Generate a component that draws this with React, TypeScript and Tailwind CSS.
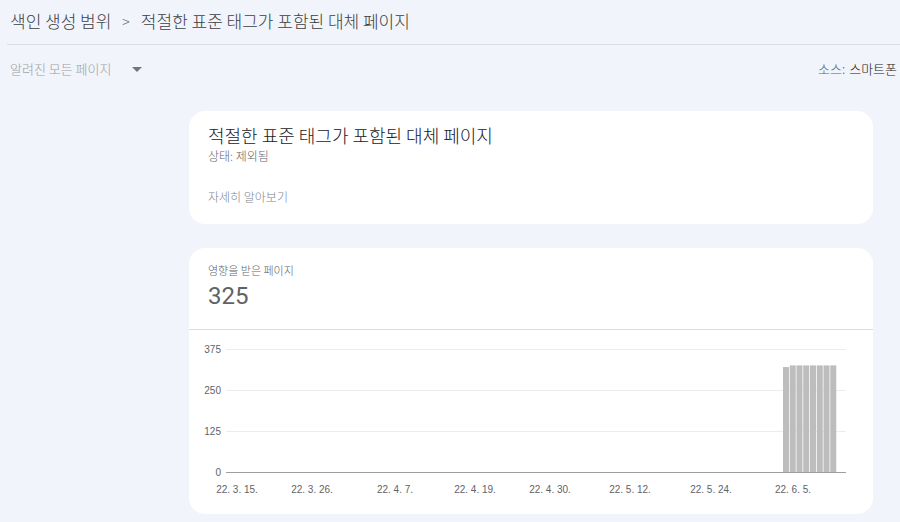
const KR = "font-['Noto_Sans_CJK_KR','Noto_Sans',sans-serif]"

const yTicks = [
  { v: 375, y: 350 },
  { v: 250, y: 391 },
  { v: 125, y: 432 },
  { v: 0, y: 473 },
]

const xTicks = [
  { label: '22. 3. 15.', x: 237 },
  { label: '22. 3. 26.', x: 312 },
  { label: '22. 4. 7.', x: 395 },
  { label: '22. 4. 19.', x: 475 },
  { label: '22. 4. 30.', x: 550 },
  { label: '22. 5. 12.', x: 630 },
  { label: '22. 5. 24.', x: 711 },
  { label: '22. 6. 5.', x: 793 },
]

// daily counts of the last week shown
const bars = [320, 325, 325, 325, 325, 325, 325, 325]

const Chart = () => {
  // svg origin is the card's left / chart top (card x=189, chart area starts at y=331)
  const ox = 189
  const oy = 331
  const zeroY = 473
  const pxPer = (473 - 350) / 375
  return (
    <svg width="684" height="183" className="block">
      {yTicks.map(t => (
        <g key={t.v}>
          <line
            x1={226 - ox}
            x2={846 - ox}
            y1={t.y - oy + 0.5}
            y2={t.y - oy + 0.5}
            stroke={t.v === 0 ? '#9e9e9e' : '#ececec'}
            strokeWidth={1}
          />
          <text
            x={221 - ox}
            y={t.y - oy + 3.5}
            textAnchor="end"
            fontSize="10"
            fill="#5f6368"
            fontFamily="'Liberation Sans', Arial, sans-serif"
          >
            {t.v}
          </text>
        </g>
      ))}
      {bars.map((v, i) => {
        const h = v * pxPer
        const x = 783 + i * 6.75 - ox
        return (
          <rect key={i} x={x} y={zeroY - oy - h} width={6} height={h} fill="#bdbdbd" />
        )
      })}
      {xTicks.map(t => (
        <text
          key={t.label}
          x={t.x - ox}
          y={494 - oy}
          textAnchor="middle"
          fontSize="10"
          fill="#5f6368"
          fontFamily="'Liberation Sans', Arial, sans-serif"
        >
          {t.label}
        </text>
      ))}
    </svg>
  )
}

export default function App() {
  return (
    <div className={`w-[900px] h-[522px] overflow-hidden bg-[#f1f4fa] font-light ${KR}`}>
      {/* breadcrumb */}
      <div className="ml-[7px] h-[45px] border-b border-[#dadce0] flex items-center pl-[3px] pb-[2px] text-[17px] text-[#3c4043] whitespace-nowrap">
        <span>색인 생성 범위</span>
        <span className="mx-[11px] text-[14px] text-[#5f6368]">&gt;</span>
        <span>적절한 표준 태그가 포함된 대체 페이지</span>
      </div>

      {/* filter row */}
      <div className="flex items-center justify-between h-[48px] pl-[10px] whitespace-nowrap">
        <div className="flex items-center text-[13px] text-[#9aa0a6]">
          <span>알려진 모든 페이지</span>
          <span className="ml-[21px] w-0 h-0 border-l-[5px] border-r-[5px] border-t-[5px] border-l-transparent border-r-transparent border-t-[#757575]" />
        </div>
        <div className="text-[13px] flex items-center w-[82px] shrink-0 overflow-hidden">
          <span className="text-[#5f6368]">소스:</span>
          <span className="ml-[4px] text-[#202124]">스마트폰</span>
          <span className="ml-[3px] shrink-0 w-0 h-0 border-l-[5px] border-r-[5px] border-t-[5px] border-l-transparent border-r-transparent border-t-[#c8b9a6]" />
        </div>
      </div>

      <div className="pl-[189px] pt-[18px] flex flex-col gap-[24px]">
        {/* info card */}
        <div className="w-[684px] h-[113px] bg-white rounded-2xl pl-[19px] pt-[12px]">
          <div className="text-[18px] leading-[24px] text-[#202124]">적절한 표준 태그가 포함된 대체 페이지</div>
          <div className="text-[12px] leading-[18px] text-[#5f6368]">상태: 제외됨</div>
          <div className="text-[12px] leading-[16px] text-[#80868b] mt-[24px]">자세히 알아보기</div>
        </div>

        {/* chart card */}
        <div className="w-[684px] h-[266px] bg-white rounded-2xl overflow-hidden">
          <div className="h-[82px] border-b border-[#dadce0] pl-[19px] pt-[14px]">
            <div className="text-[11px] leading-[16px] text-[#5f6368]">영향을 받은 페이지</div>
            <div className="text-[24px] leading-[32px] mt-[2px] text-[#5f6368] font-normal font-['Roboto','Liberation_Sans',sans-serif]">325</div>
          </div>
          <Chart />
        </div>
      </div>
    </div>
  )
}
